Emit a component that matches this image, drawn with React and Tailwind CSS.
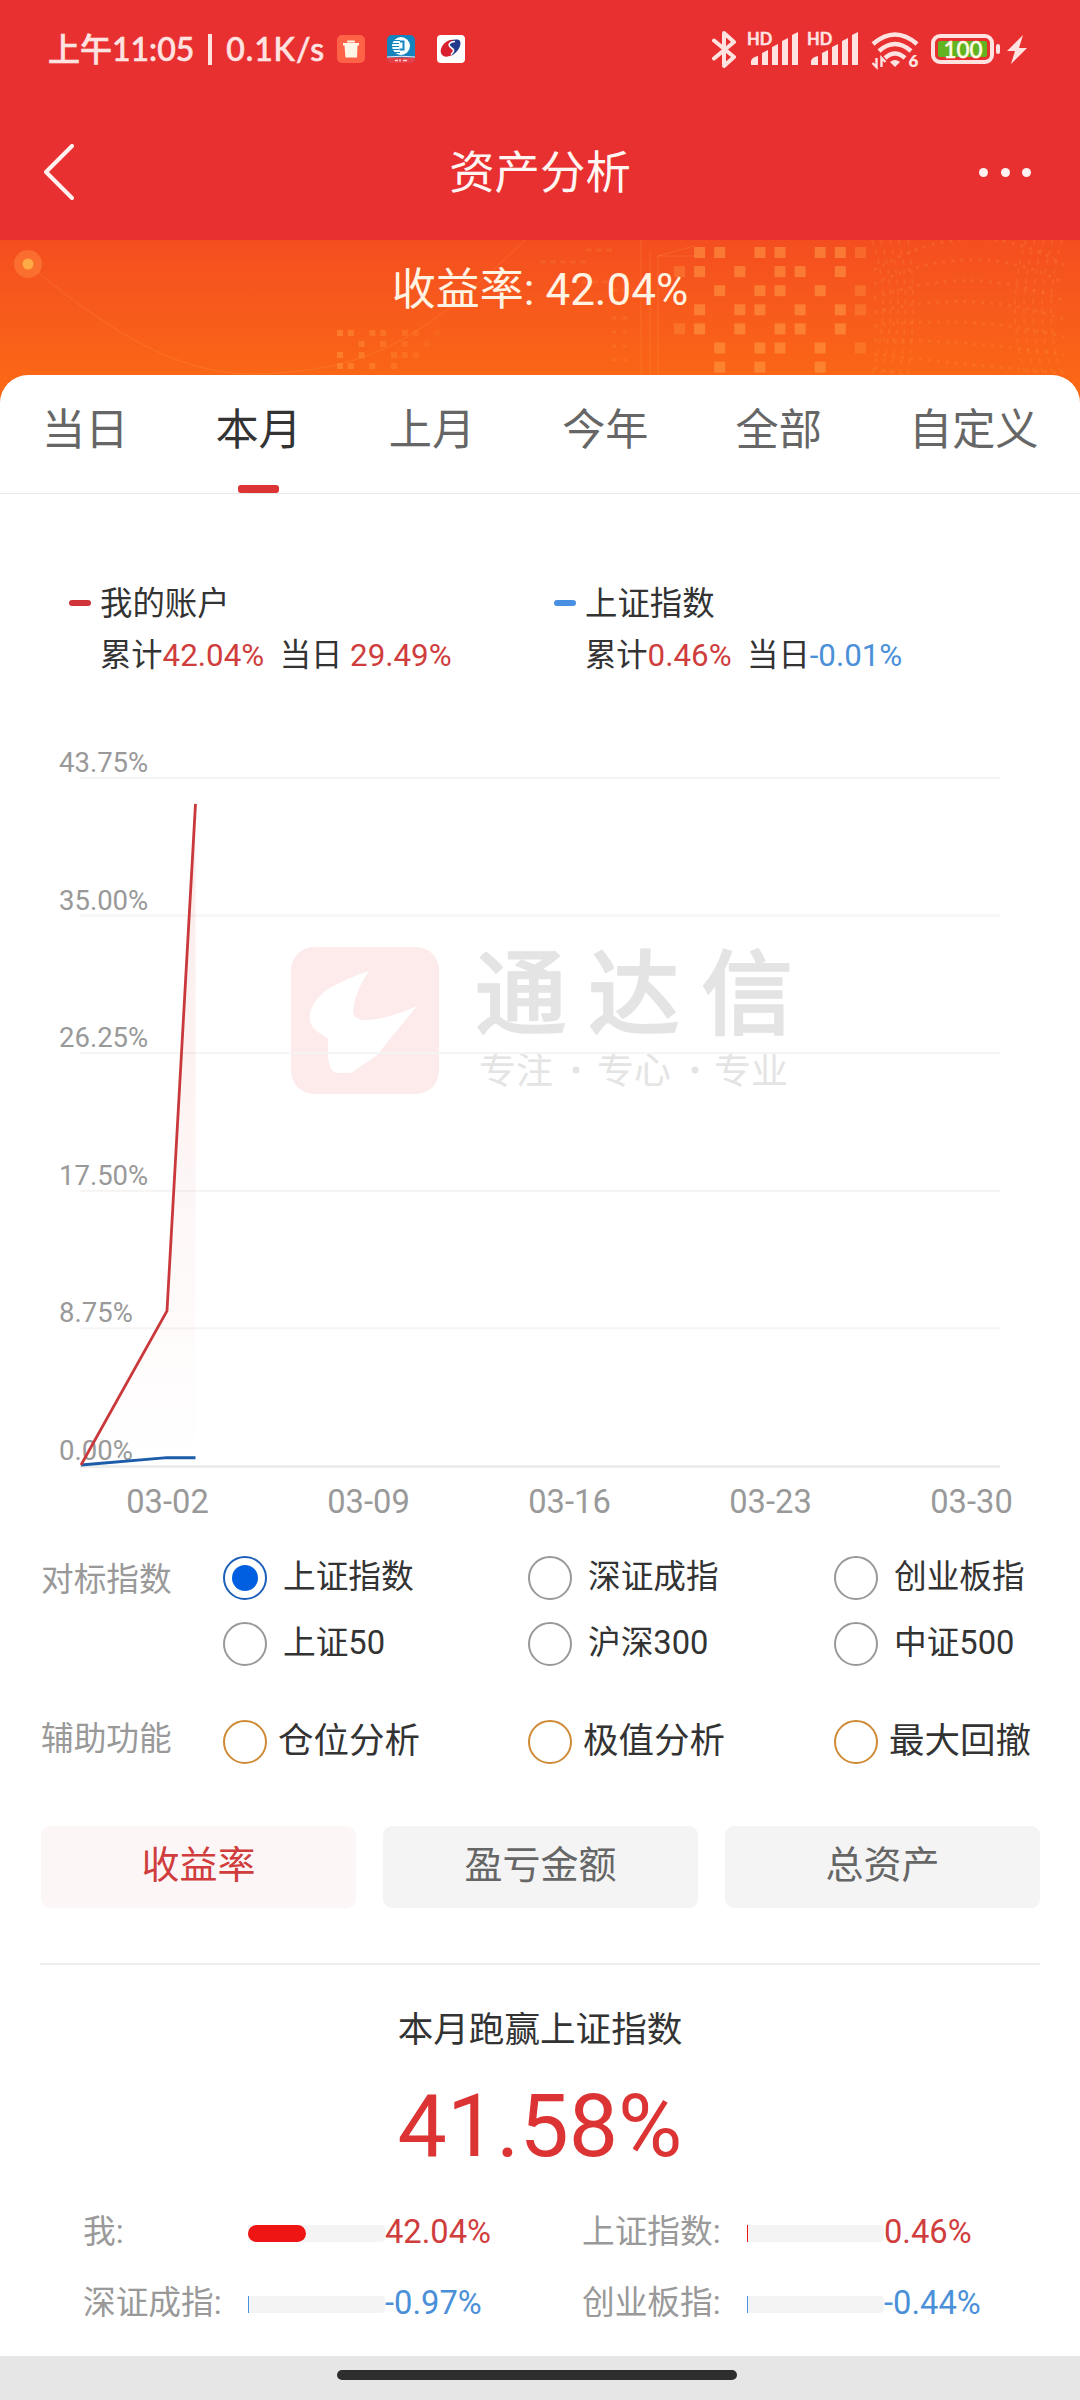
import { useState } from "react";

const tabs = ["当日", "本月", "上月", "今年", "全部", "自定义"];
const indexes = ["上证指数", "深证成指", "创业板指", "上证50", "沪深300", "中证500"];
const helpers = ["仓位分析", "极值分析", "最大回撤"];
const modes = ["收益率", "盈亏金额", "总资产"];

const stats = [
  { label: "我:", value: 42.04 },
  { label: "上证指数:", value: 0.46 },
  { label: "深证成指:", value: -0.97 },
  { label: "创业板指:", value: -0.44 },
];

// colonnes remplies de chaque ligne de la mosaïque
const bigSquares = [
  [1, 2, 4, 5, 7, 8, 9],
  [0, 1, 3, 5, 6, 8],
  [2, 4, 5, 7, 9],
  [1, 3, 4, 6, 8, 9],
  [0, 1, 3, 5, 6, 8],
  [2, 4, 5, 7, 9],
  [2, 4, 7],
];
const smallSquares = [
  [0, 1, 3, 4, 6, 7, 9],
  [2, 4, 6, 8],
  [0, 2, 5, 6, 7],
  [0, 1, 3, 5],
];

function Signal() {
  return (
    <svg className="overflow-visible" width="50" height="36" viewBox="0 0 50 36" fill="#ffe3e1">
      <text x="-1" y="14" fontSize="16.500" fontWeight="700" fontFamily="Lato, sans-serif" stroke="#ffe3e1" strokeWidth="0.400">HD</text>
      <path d="M3 34v-4q1-4 7-5v9zM14 34V22l6-3v15zM24 34V16l6-3v21zM34 34V10l6-3v27zM44 34V4l6-3v33z" />
    </svg>
  );
}

function StatusBar() {
  return (
    <div className="flex h-[104px] items-start pl-[48px] pr-[53px] text-[#ffe3e1]">
      <div className="mt-[26px] flex h-[46px] w-[277px] items-center justify-between whitespace-pre font-[Lato,'Noto_Sans_CJK_SC',sans-serif] text-[32px] font-medium leading-[46px] [-webkit-text-stroke:0.6px_#ffe3e1]">
        <span>上午11:05</span>
        <span className="h-[31px] w-[4px] bg-[#ffe3e1]" />
        <span className="tracking-[0.9px]">0.1K/s</span>
      </div>

      <div className="ml-[12px] mt-[35px] flex gap-[22px]">
        <svg width="28" height="28" viewBox="0 0 28 28">
          <rect width="28" height="28" rx="5" fill="#ff6347" />
          <rect x="10" y="5.500" width="8" height="2" rx="1" fill="#fff6e8" />
          <path d="M6 8h16v2.500h-1.500L20 22.500H8.500L7.500 10.500H6z" fill="#fff6e8" />
        </svg>
        <svg width="28" height="28" viewBox="0 0 28 28">
          <rect width="28" height="28" rx="5" fill="#1583bd" />
          <path d="M0 22.500h28q0 5.500-5 5.500H5q-5 0-5-5.500z" fill="#e83e48" />
          <path d="M0 22q14-1.500 28 0" stroke="#f5e9ef" fill="none" />
          <path d="M14 2a9 9 0 1 1-9 9 9 9 0 0 1 9-9z" fill="#f4ffff" />
          <path d="M5 5.500h8M4 8.500h8M4 11.500h8M4 14.500h8M6 17.500h7" stroke="#1583bd" strokeWidth="1" />
          <path d="M13 6.500h3.500v8h-4" stroke="#1583bd" strokeWidth="2" fill="none" />
          <path d="M8 25.500h3m2-1v2m3-1h4" stroke="#ffd9d4" strokeWidth="1.500" />
        </svg>
        <svg width="28" height="28" viewBox="0 0 28 28">
          <rect width="28" height="28" rx="4" fill="#fff" />
          <path d="M18 5C10 3 2 12 4 18c2 6 11 4 13-1 1-4-5-3-5-7 0-2 3-4 6-5z" fill="#d8202f" />
          <path d="M12 9c1-4 9-6 11-3 2 5-3 12-9 15 4-5 3-6 0-8-2-1-3-2-2-4z" fill="#24388e" />
          <path d="M18 6.500c-5 0-8 3.500-4 6s3 4 0 7" stroke="#fff" strokeWidth="1.600" fill="none" />
        </svg>
      </div>

      <div className="ml-auto mt-[30px] flex items-start">
        <svg width="26" height="40" viewBox="0 0 26 40" fill="none" stroke="#ffe3e1" strokeWidth="4" strokeLinejoin="round" strokeLinecap="round">
          <path d="M2 10.500 22 27 12 36V3L22 12 2 28.500" />
        </svg>
        <div className="ml-[10px] mt-[1px] flex gap-[10px]">
          <Signal />
          <Signal />
        </div>
        <svg className="ml-[13px] mt-[2px] overflow-visible" width="48" height="37" viewBox="0 0 48 37" fill="none" stroke="#ffe3e1" strokeWidth="4.500">
          <path d="M2 12q22-19 44 0M8 19q16-14 32 0M14 26q10-9 20 0" />
          <path d="M19 30q5-4 10 0l-5 5z" fill="#ffe3e1" stroke="none" />
          <path d="M5.500 26v9l-4-4M10.500 35v-9l4 4" strokeWidth="2.400" />
          <text x="37.500" y="35" fontSize="17" fontWeight="800" fontFamily="Lato, sans-serif" fill="#ffe3e1" stroke="none">6</text>
        </svg>
        <svg className="ml-[12px] mt-[4px]" width="96" height="30" viewBox="0 0 96 30">
          <rect x="2" y="2" width="59" height="26" rx="7" fill="none" stroke="#ffe3e1" strokeWidth="4" />
          <rect x="7" y="7" width="49" height="16" rx="2" fill="#62b320" />
          <text x="32" y="23.500" textAnchor="middle" fontSize="22.500" fontWeight="500" fontFamily="Lato, sans-serif" fill="#fffbe8" stroke="#fffbe8" strokeWidth="0.400">100</text>
          <rect x="65" y="10" width="4" height="10" rx="2" fill="#ffe3e1" />
          <path d="M92 1 76 17h8l-4 13 16-16h-8z" fill="#ffe3e1" />
        </svg>
      </div>
    </div>
  );
}

function BannerArt() {
  return (
    <svg className="absolute inset-0" width="1080" height="170" viewBox="0 0 1080 170" fill="none">
      <g stroke="#ff9a45" strokeOpacity="0.28">
        <path d="M28 24C130 110 190 131 245 134 380 134 430 90 525 0" />
        <path d="M641 0v135M650 12v123M658 16v119M658 16h40M658 16l36-10" />
        <path d="M540 22h48M586 10h30M572 42h38M612 50h22" strokeWidth="3" strokeDasharray="6 4" strokeOpacity="0.18" />
        <path d="M612 78h22M612 92h22M612 106h22M612 120h22" strokeWidth="3" strokeDasharray="4 7" strokeOpacity="0.18" />
        {[0, 1, 2, 3, 4, 5, 6, 7, 8].map((i) => (
          <path key={i} d={`M874 ${30 + i * 14}q100 ${-60 + i * 12} 190 ${-5 + i * 4}`} strokeWidth="3" strokeDasharray="3 6" strokeOpacity="0.2" />
        ))}
        {[0, 1, 2, 3, 4].map((i) => (
          <path key={i} d={`M${872 + i * 9} 0q${22 - i * 3} 60 0 135M${1062 - i * 9} 0q-22 70 0 135`} strokeWidth="2" strokeDasharray="5 5" strokeOpacity="0.18" />
        ))}
      </g>
      <circle cx="28" cy="24" r="14" fill="#ff8a3d" fillOpacity="0.5" />
      <circle cx="28" cy="24" r="5.500" fill="#ffab45" />
      {bigSquares.map((row, r) =>
        row.map((c) => (
          <rect key={`${r}-${c}`} x={674 + c * 20.100} y={7 + r * 19.100} width="11" height="11" fill="#ffa24a" fillOpacity={c === 0 || c === 9 ? 0.3 : 0.5} />
        ))
      )}
      {smallSquares.map((row, r) =>
        row.map((c) => (
          <rect key={`${r}-${c}`} x={337 + c * 10.800} y={90 + r * 11} width="6" height="6" fill="#ffa040" fillOpacity={0.45 - c * 0.04} />
        ))
      )}
    </svg>
  );
}

function LegendItem({ name, bar, total, day, dayClass }) {
  return (
    <div>
      <div className="flex h-[52px] items-center">
        <span className={`-mt-[3px] h-[6px] w-[22px] rounded-full ${bar}`} />
        <span className="ml-[9px] text-[32.4px]">{name}</span>
      </div>
      <p className="ml-[31px] h-[52px] whitespace-pre text-[31.3px] leading-[52px]">
        累计<span className="text-[#cf3d3d]">{total}</span>{"  "}当日<span className={dayClass}>{day}</span>
      </p>
    </div>
  );
}

function Chart() {
  const max = 43.75;
  const y = (v) => 784 - (v / max) * 688;
  const x = [81, 167, 195.5];
  const mine = [0, 9.8, 42.04];
  const index = [0, 0.47, 0.46];
  const line = (data) => data.map((v, i) => `${x[i]},${y(v) - 1}`).join(" ");
  const ticks = [43.75, 35, 26.25, 17.5, 8.75, 0];
  const days = ["03-02", "03-09", "03-16", "03-23", "03-30"];

  return (
    <svg className="block shrink-0" width="1080" height="850" viewBox="0 0 1080 850">
      <defs>
        <linearGradient id="area" x1="0" y1="0" x2="0" y2="1">
          <stop offset="0" stopColor="#e03030" stopOpacity="0.1" />
          <stop offset="1" stopColor="#e03030" stopOpacity="0" />
        </linearGradient>
      </defs>

      {/* filigrane */}
      <rect x="291" y="265" width="148" height="147" rx="23" fill="#fdeaea" />
      <path d="M369 289Q354 293 328 307C308 321 304 341 318 350L328 357V375Q329 389 336 391H351L364 382Q372 378 377 373L417 324Q386 338 364 338 350 337 354 324 356 308 369 289Z" fill="#fff" />
      <g fontFamily="'Noto Sans CJK SC', sans-serif" fill="#e4e4e4">
        <g fontSize="92" fontWeight="500" stroke="#e4e4e4" strokeWidth="1.500" strokeLinejoin="round">
          <text x="475" y="345">通</text>
          <text x="588" y="345">达</text>
          <text x="701" y="345">信</text>
        </g>
        <g fontSize="37">
          <text x="479" y="402">专注</text>
          <text x="597" y="402">专心</text>
          <text x="714" y="402">专业</text>
        </g>
        <circle cx="576" cy="388" r="3.500" />
        <circle cx="695" cy="388" r="3.500" />
      </g>

      {ticks.map((t) => (
        <g key={t}>
          <rect x="80" y={y(t) - 1} width="920" height={t ? 2 : 3} fill={t ? "#f5f4f3" : "#ebedeb"} />
          <text x="59" y={y(t) - 6} fontSize="27.500" fill="#999">{t.toFixed(2)}%</text>
        </g>
      ))}
      {days.map((d, i) => (
        <text key={d} x={167.5 + i * 201} y="830.500" textAnchor="middle" fontSize="32.700" fill="#999">{d}</text>
      ))}

      <polygon points={`${line(mine)} 195.5,784`} fill="url(#area)" />
      <polyline points={line(index)} fill="none" stroke="#1c5ca8" strokeWidth="2.800" />
      <polyline points={line(mine)} fill="none" stroke="#c9393b" strokeWidth="2.800" />
    </svg>
  );
}

function Radio({ label, checked, onClick, helper }) {
  const ring = helper ? "border-[#cf8a35]" : checked ? "border-[#1c5fb8]" : "border-[#999]";
  return (
    <button onClick={onClick} className="flex h-[44px] items-center">
      <span className={`flex size-[44px] items-center justify-center rounded-full border-2 ${ring}`}>
        {checked && <span className={`size-[26px] rounded-full ${helper ? "bg-[#cf8a35]" : "bg-[#005fe0]"}`} />}
      </span>
      <span className={helper ? "ml-[11px] text-[35.5px]" : "ml-[16px] text-[32.7px]"}>{label}</span>
    </button>
  );
}

function Stat({ label, value }) {
  const up = value >= 0;
  return (
    <div className="flex h-[50px] items-center text-[32.7px]">
      <span className="w-[165px] text-[#999]">{label}</span>
      <span className="h-[17px] w-[137px] rounded-r-[4px] bg-[#f4f4f4]">
        <span
          className={`block h-full min-w-[1px] ${Math.abs(value) > 5 ? "rounded-full" : ""} ${up ? "bg-[#f01515]" : "bg-[#4a90e2]"}`}
          style={{ width: `${Math.abs(value)}%` }}
        />
      </span>
      <span className={up ? "text-[#cf3d3d]" : "text-[#4a90d9]"}>{value.toFixed(2)}%</span>
    </div>
  );
}

export default function App() {
  const [tab, setTab] = useState("本月");
  const [index, setIndex] = useState("上证指数");
  const [helper, setHelper] = useState("");
  const [mode, setMode] = useState("收益率");

  return (
    <div className="flex h-[2400px] w-[1080px] flex-col overflow-hidden bg-white font-[Roboto,'Noto_Sans_CJK_SC',sans-serif] text-[#333]">
      {/* ENTETE */}
      <header className="h-[240px] shrink-0 bg-[#e83030]">
        <StatusBar />
        <div className="flex h-[136px] items-center justify-between pl-[44px] pr-[49px]">
          <svg width="95" height="56" viewBox="0 0 95 56" fill="none" stroke="#fff2f0" strokeWidth="4" strokeLinecap="round" strokeLinejoin="round">
            <path d="M28 2 2 28l26 26" />
          </svg>
          <h1 className="pl-[5px] pt-[4px] text-[45.4px] leading-[60px] text-[#fff5f3]">资产分析</h1>
          <div className="flex w-[95px] justify-end gap-[12.5px]">
            <span className="size-[9px] rounded-full bg-[#fff2f0]" />
            <span className="size-[9px] rounded-full bg-[#fff2f0]" />
            <span className="size-[9px] rounded-full bg-[#fff2f0]" />
          </div>
        </div>
      </header>

      <div className="relative h-[170px] shrink-0 bg-linear-to-b from-[#f44e20] to-[#fc6b12] pt-[20px]">
        <BannerArt />
        <p className="relative text-center text-[44px] leading-[60px] text-[#fff3e4]">收益率: 42.04%</p>
      </div>

      {/* ONGLETS */}
      <nav className="relative -mt-[35px] flex h-[119px] shrink-0 gap-[87px] rounded-t-[28px] border-b border-[#e8e8e8] bg-white pl-[42px] pt-[26px]">
        {tabs.map((t) => (
          <button
            key={t}
            onClick={() => setTab(t)}
            className={`flex flex-col items-center text-[43.2px] leading-[60px] ${t === tab ? "text-[#333]" : "text-[#666]"}`}
          >
            {t}
            {t === tab && <span className="mt-[24px] h-[8px] w-[41px] rounded-[3px] bg-[#dc3434]" />}
          </button>
        ))}
      </nav>

      <div className="mt-[84px] grid shrink-0 grid-cols-[485px_auto] pl-[69px]">
        <LegendItem name="我的账户" bar="bg-[#d03438]" total="42.04%" day=" 29.49%" dayClass="text-[#cf3d3d]" />
        <LegendItem name="上证指数" bar="bg-[#4a90e2]" total="0.46%" day="-0.01%" dayClass="text-[#4a90d9]" />
      </div>

      <Chart />

      {/* CHOIX DES INDICES */}
      <div className="mt-[24px] flex shrink-0 pl-[41px]">
        <span className="w-[182px] pt-[2px] text-[32.7px] leading-[44px] text-[#999]">对标指数</span>
        <div className="grid grid-cols-[305px_306px_auto] gap-y-[22px]">
          {indexes.map((n) => (
            <Radio key={n} label={n} checked={n === index} onClick={() => setIndex(n)} />
          ))}
        </div>
      </div>
      <div className="mt-[54px] flex shrink-0 pl-[41px]">
        <span className="-mt-[3px] w-[182px] text-[32.7px] leading-[44px] text-[#999]">辅助功能</span>
        <div className="grid grid-cols-[305px_306px_auto]">
          {helpers.map((n) => (
            <Radio key={n} helper label={n} checked={n === helper} onClick={() => setHelper(n)} />
          ))}
        </div>
      </div>

      <div className="mt-[62px] grid shrink-0 grid-cols-3 gap-[27px] pl-[41px] pr-[40px]">
        {modes.map((m) => (
          <button
            key={m}
            onClick={() => setMode(m)}
            className={`h-[82px] rounded-[9px] pb-[3px] text-[38px] ${m === mode ? "bg-[#fdf6f6] text-[#cf3d3d]" : "bg-[#f4f4f4] text-[#666]"}`}
          >
            {m}
          </button>
        ))}
      </div>

      <div className="mx-[40px] mt-[55px] h-[2px] shrink-0 bg-[#eee]" />

      {/* RESULTAT */}
      <p className="mt-[35px] text-center text-[35.6px] leading-[60px]">本月跑赢上证指数</p>
      <p className="mt-[16px] text-center text-[87.8px] leading-[100px] text-[#dc3434]">41.58%</p>
      <div className="mt-[32px] grid grid-cols-[499px_auto] gap-y-[21px] pl-[83px]">
        {stats.map((s) => (
          <Stat key={s.label} label={s.label} value={s.value} />
        ))}
      </div>

      <footer className="mt-auto flex h-[44px] shrink-0 justify-center bg-[#e6e6e6] pr-[7px] pt-[14px]">
        <div className="h-[10px] w-[400px] rounded-full bg-[#2e2e2e]" />
      </footer>
    </div>
  );
}
